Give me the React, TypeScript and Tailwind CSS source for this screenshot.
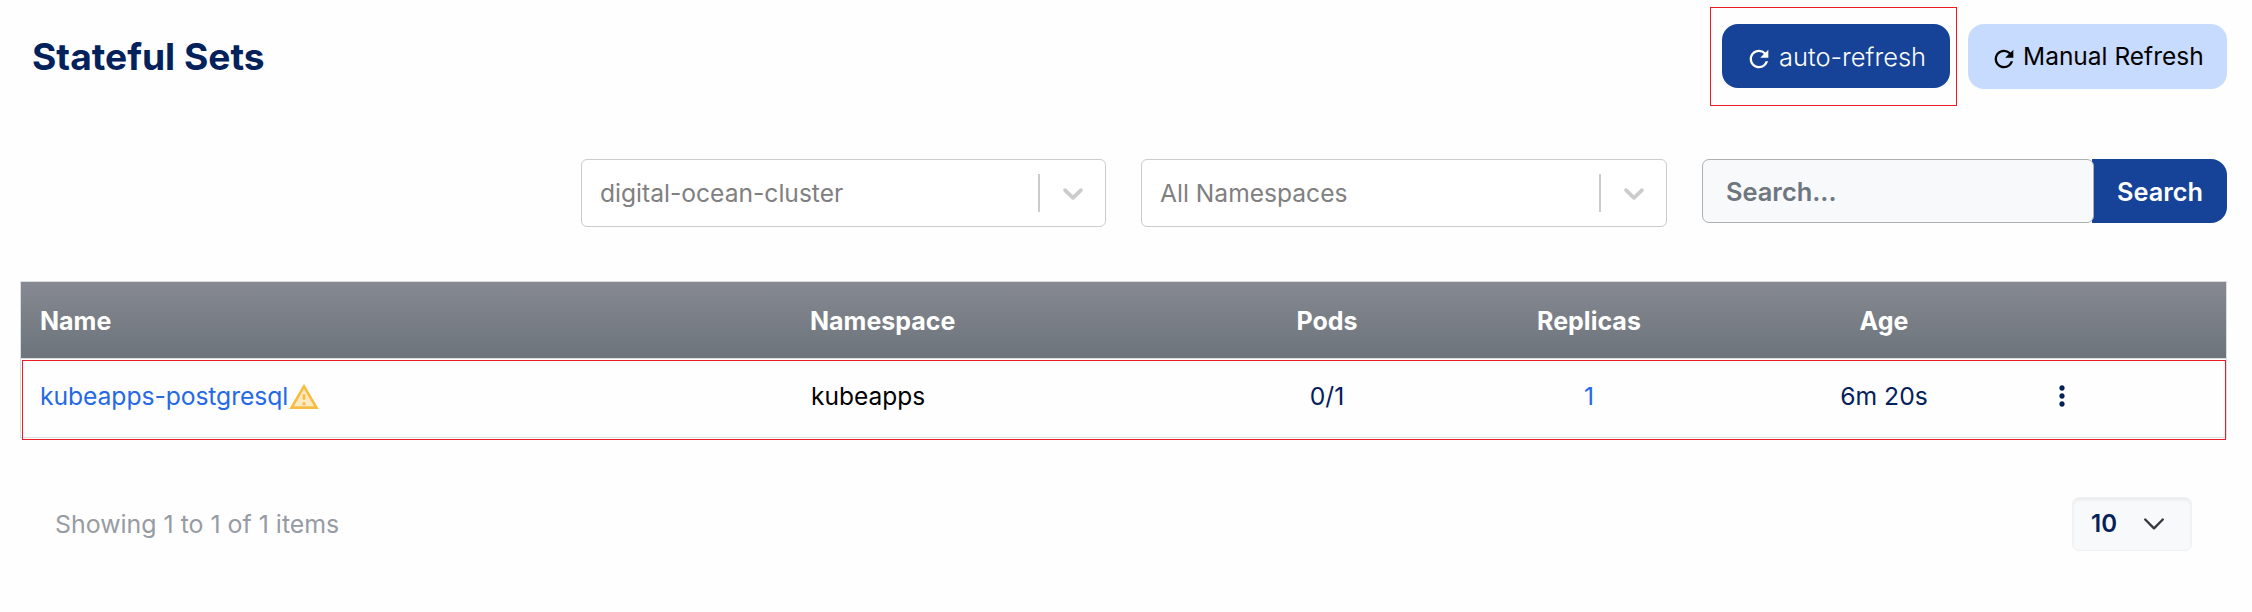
import type { ReactNode } from "react";
import { MdMoreVert, MdRefresh } from "react-icons/md";

function SelectBox({ label, className }: { label: string; className: string }) {
  return (
    <div className={`flex h-[68px] items-center rounded-[6px] border border-[#cccccc] bg-white ${className}`}>
      <span className="flex-1 pl-[18px] text-[24.6px] leading-[36px] text-[#808080]">{label}</span>
      <span className="h-[38px] w-[2px] bg-[#cccccc]" />
      <span className="flex w-[65px] justify-center">
        <svg viewBox="0 0 20 20" className="size-[34px] fill-[#cccccc]">
          <path d="M4.516 7.548c0.436-0.446 1.043-0.481 1.576 0l3.908 3.747 3.908-3.747c0.533-0.481 1.141-0.446 1.574 0 0.436 0.445 0.408 1.197 0 1.615-0.406 0.418-4.695 4.502-4.695 4.502-0.217 0.223-0.502 0.335-0.787 0.335s-0.57-0.112-0.789-0.335c0 0-4.287-4.084-4.695-4.502s-0.436-1.17 0-1.615z" />
        </svg>
      </span>
    </div>
  );
}

function WarningIcon() {
  return (
    <svg viewBox="0 0 24 24" className="mt-[2px] size-[32px] shrink-0 fill-[#f8bb42]">
      <path d="M12 5.99 19.53 19H4.47z" opacity=".32" />
      <path d="M1 21h22L12 2 1 21zm3.47-2L12 5.99 19.53 19H4.47z" />
      <path d="M11 16h2v2h-2zm0-6h2v4h-2z" />
    </svg>
  );
}

const columns = "grid grid-cols-[770px_405px_262px_262px_328px_1fr] items-center";

function Centered({ children }: { children?: ReactNode }) {
  return <div className="text-center">{children}</div>;
}

export default function App() {
  return (
    <div className="h-[612px] w-[2252px] overflow-hidden bg-[#fefefe] font-['Inter',sans-serif] text-[24.7px] leading-[36px] text-[#03215a]">
      <header className="flex h-[113px] justify-between pr-[25px] pl-[32px]">
        <h1 className="mt-[33px] text-[37.2px] leading-[48px] font-bold">Stateful Sets</h1>
        <div className="flex items-start gap-[18px] pt-[24px]">
          <div className="relative">
            <button className="flex h-[64px] w-[228px] items-center rounded-[16px] bg-[#164397] pl-[23px] text-[25.5px] font-light text-white">
              <MdRefresh className="mt-[5px] size-[28px]" />
              <span className="pt-px pl-[6px] whitespace-nowrap">auto-refresh</span>
            </button>
            <span className="pointer-events-none absolute -top-[17px] -left-[12px] h-[99px] w-[247px] border border-[#ed1c24]" />
          </div>
          <button className="flex h-[65px] w-[259px] items-center rounded-[16px] bg-[#c7dbff] pl-[22px] text-[24.5px] text-black">
            <MdRefresh className="mt-[4px] size-[28px]" />
            <span className="pb-px pl-[5px] whitespace-nowrap">Manual Refresh</span>
          </button>
        </div>
      </header>

      <div className="flex h-[168px] items-start justify-end pt-[46px] pr-[25px]">
        <SelectBox label="digital-ocean-cluster" className="mr-[35px] w-[525px]" />
        <SelectBox label="All Namespaces" className="mr-[35px] w-[526px]" />
        <div className="flex h-[64px] w-[525px] rounded-[16px] bg-[linear-gradient(90deg,transparent_390px,#164397_390px)]">
          <div className="flex w-[392px] items-center rounded-[7px] border border-[#adb0b3] bg-[#f8f9fb] pt-px pl-[23px] text-[25.4px] font-semibold text-[#6e767e]">
            Search...
          </div>
          <button className="flex-1 pt-px pr-px text-[25.3px] font-semibold text-white">Search</button>
        </div>
      </div>

      <div className="relative mr-[25px] ml-[20px] border border-[#dcdddf]">
        <div className={`${columns} h-[76px] bg-linear-to-b from-[#868991] to-[#6d747b] pt-px text-[25px] font-bold text-white`}>
          <div className="pl-[19px]">Name</div>
          <div className="pl-[19px]">Namespace</div>
          <Centered>Pods</Centered>
          <Centered>Replicas</Centered>
          <Centered>Age</Centered>
          <div />
        </div>
        <div className={`${columns} h-[79px] border-t border-[#dcdddf] pb-[5px]`}>
          <div className="flex items-center pl-[19px]">
            <a className="tracking-[-0.08px] text-[#2569e6]">kubeapps-postgresql</a>
            <WarningIcon />
          </div>
          <div className="pl-[20px] text-[24.5px] text-black">kubeapps</div>
          <Centered>0/1</Centered>
          <Centered>
            <a className="text-[#2569e6]">1</a>
          </Centered>
          <Centered>6m 20s</Centered>
          <div className="-ml-[2px]">
            <MdMoreVert className="size-[32px]" />
          </div>
        </div>
        <span className="pointer-events-none absolute top-[78px] right-0 left-px h-[80px] border border-[#ed1c24]" />
      </div>

      <footer className="flex items-center justify-between pt-[59px] pr-[60px] pl-[55px]">
        <span className="text-[24.9px] text-[#979ca3]">Showing 1 to 1 of 1 items</span>
        <div className="flex h-[54px] w-[120px] items-center justify-between rounded-[7px] border border-[#f0f1f3] bg-[#f8f9fb] pr-[26px] pl-[18px] shadow-[inset_0_2px_3px_rgba(0,0,0,0.06)]">
          <span className="text-[24px] font-semibold">10</span>
          <svg viewBox="0 0 22 14" className="h-[14px] w-[22px] fill-none stroke-[#343a40] stroke-[2.4]">
            <path d="m2.2 2.5 8.8 8.8 8.8-8.8" strokeLinecap="round" strokeLinejoin="round" />
          </svg>
        </div>
      </footer>
    </div>
  );
}
